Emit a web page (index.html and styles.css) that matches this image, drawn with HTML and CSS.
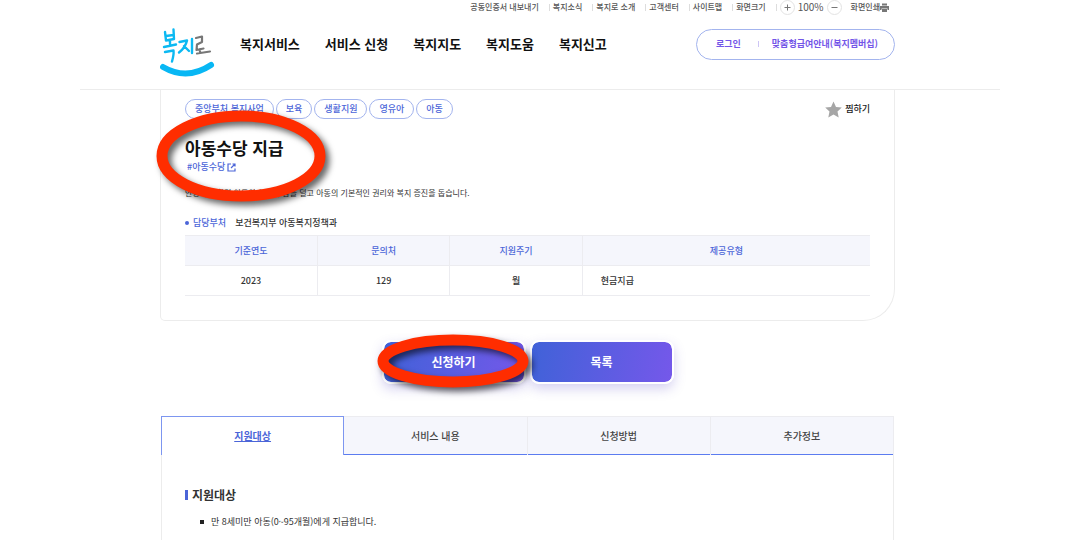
FILE: index.html
```html
<!DOCTYPE html>
<html lang="ko">
<head>
<meta charset="utf-8">
<title>아동수당 지급 - 복지로</title>
<link rel="stylesheet" href="styles.css">
</head>
<body>
<header class="header">
  <div class="inner">
    <ul class="utility">
      <li><a href="#">공동인증서 내보내기</a></li>
      <li><a href="#">복지소식</a></li>
      <li><a href="#">복지로 소개</a></li>
      <li><a href="#">고객센터</a></li>
      <li><a href="#">사이트맵</a></li>
      <li>화면크기</li>
      <li class="scale">
        <button class="round" type="button" aria-label="확대"><svg width="7" height="7" viewBox="0 0 7 7"><path d="M3.5 .5v6M.5 3.5h6" stroke="#777" fill="none"/></svg></button>
        <span class="percent">100%</span>
        <button class="round" type="button" aria-label="축소"><svg width="7" height="7" viewBox="0 0 7 7"><path d="M.5 3.5h6" stroke="#777" fill="none"/></svg></button>
      </li>
      <li class="print"><a href="#">화면인쇄<svg width="9" height="9" viewBox="0 0 9 9"><path d="M2 .5h5v2H2zM0 3h9v4H7.5V5.500h-6V7H0zM2 6h5v3H2z" fill="#777"/></svg></a></li>
    </ul>
    <div class="main-bar">
      <a class="logo" href="#" aria-label="복지로">
        <svg width="56" height="52" viewBox="0 0 56 52" fill="none" stroke-linecap="round" stroke-linejoin="round">
          <g stroke="#0cb9f2" stroke-width="2.400">
            <path d="M5 7l1 8.500M13.500 4.500L14 14M6 11l7.500-1M6 15.500l8-1.500M10 15v5M4 22l12-2.500M5 27l8.500-1.500q.5 4-1.500 11"/>
            <path d="M19.500 17l7.500-1.500q-1.500 7-8 12M24 21l5 5M32 14v14"/>
          </g>
          <path d="M36 13l6-1.500v5.500l-5 2.500-.5 5.500 7-1.500M40 24v4M37 28.500l13-2" stroke="#777" stroke-width="2.200"/>
          <path d="M3 42q24 14 48-2" stroke="#08b7f4" stroke-width="6"/>
        </svg>
      </a>
      <nav class="nav">
        <a href="#">복지서비스</a><a href="#">서비스 신청</a><a href="#">복지지도</a><a href="#">복지도움</a><a href="#">복지신고</a>
      </nav>
      <div class="account"><a href="#">로그인</a><a class="member" href="#">맞춤형급여안내(복지멤버십)</a></div>
    </div>
  </div>
</header>

<main class="inner">
  <section class="card">
    <div class="card-top">
      <ul class="tags"><li>중앙부처 복지사업</li><li>보육</li><li>생활지원</li><li>영유아</li><li>아동</li></ul>
      <button class="favorite" type="button"><svg width="17" height="17" viewBox="0 0 17 17"><path d="M8.500.5l2.500 5.400 5.800.7-4.300 4 1.200 5.900-5.200-3-5.200 3 1.200-5.900-4.300-4 5.800-.7z" fill="#a6a6a6"/></svg>찜하기</button>
    </div>
    <div class="title-box">
      <h1>아동수당 지급</h1>
      <svg class="ring ring-title" viewBox="0 0 170 92"><ellipse cx="85" cy="46" rx="79" ry="40"/></svg>
    </div>
    <a class="hash" href="#">#아동수당<svg width="9" height="9" viewBox="0 0 9 9"><path d="M4 1H1v7h7V5.500M5.500 1H8v2.500M8 1L4 5" fill="none" stroke="#4b65d8" stroke-width="1.200"/></svg></a>
    <p class="summary">안정적인 환경 아동의 양육 부담을 덜고 아동의 기본적인 권리와 복지 증진을 돕습니다.</p>
    <dl class="dept"><dt>담당부처</dt><dd>보건복지부 아동복지정책과</dd></dl>
    <table class="info">
      <thead><tr><th>기준연도</th><th>문의처</th><th>지원주기</th><th class="wide">제공유형</th></tr></thead>
      <tbody><tr><td>2023</td><td>129</td><td>월</td><td class="wide">현금지급</td></tr></tbody>
    </table>
  </section>

  <div class="actions">
    <div class="apply-box">
      <button class="action" type="button">신청하기</button>
      <svg class="ring ring-apply" viewBox="0 0 152 54"><ellipse cx="76" cy="27" rx="70" ry="21"/></svg>
    </div>
    <button class="action" type="button">목록</button>
  </div>

  <section class="detail">
    <div class="tabs" role="tablist">
      <button class="tab active" type="button" role="tab" aria-selected="true">지원대상</button>
      <button class="tab" type="button" role="tab">서비스 내용</button>
      <button class="tab" type="button" role="tab">신청방법</button>
      <button class="tab" type="button" role="tab">추가정보</button>
    </div>
    <div class="panel">
      <h2>지원대상</h2>
      <ul><li>만 8세미만 아동(0~95개월)에게 지급합니다.</li></ul>
    </div>
  </section>
</main>
</body>
</html>
```

FILE: styles.css
```css
* { box-sizing: border-box; }
body {
  margin: 0;
  background: #fff;
  color: #333;
  font-family: "Noto Sans CJK KR", sans-serif;
  font-size: 9px;
  font-weight: 500;
  line-height: 14px;
  overflow: hidden;
}
a { color: inherit; text-decoration: none; }
ul, dl, dd, h1, h2, p { margin: 0; padding: 0; list-style: none; }
button { font: inherit; color: inherit; border: 0; padding: 0; background: none; cursor: pointer; }
svg { display: block; }
.inner { margin: 0 185px 0 160px; }

.header { margin: 0 80px; border-bottom: 1px solid #ececec; padding-bottom: 15px; }
.header .inner { margin: 0 105px 0 80px; }
.utility {
  display: flex;
  justify-content: flex-end;
  align-items: center;
  height: 14px;
  padding-right: 6px;
  font-size: 8px;
  color: #555;
}
.utility li + li { margin-left: 10px; padding-left: 4px; background: linear-gradient(#ddd, #ddd) left center / 1px 7px no-repeat; }
.utility li.scale { display: flex; align-items: center; gap: 3px; }
.utility li.print { margin-left: 5px; background: none; }
.print a { display: flex; align-items: center; }
.round { width: 15px; height: 15px; border: 1px solid #e3e3e3; border-radius: 50%; display: grid; place-items: center; background: #fff; }
.percent { font-size: 10px; font-weight: 400; }
.main-bar { display: flex; align-items: center; height: 60px; }
.logo { margin-top: 14px; }
.nav { display: flex; gap: 25px; margin-left: 24px; font-size: 13px; font-weight: 700; line-height: 20px; color: #111; }
.account {
  margin-left: auto;
  display: flex;
  align-items: center;
  height: 31px;
  padding: 0 16px 0 19px;
  border: 1px solid #a3b4ee;
  border-radius: 16px;
  color: #7356e8;
  font-weight: 700;
}
.member { margin-left: 17px; padding-left: 14px; background: linear-gradient(#cdc5f5, #cdc5f5) left center / 1px 6px no-repeat; }

.card { border: 1px solid #ececec; border-top: 0; border-radius: 0 0 32px 5px; padding: 9px 24px 24px; }
.card-top { display: flex; justify-content: space-between; align-items: center; }
.tags { display: flex; gap: 2px; }
.tags li { height: 20px; padding: 0 9px; border: 1px solid #a3b4ee; border-radius: 10px; line-height: 18px; color: #4b65d8; }
.favorite { display: flex; align-items: center; gap: 3px; color: #222; }
.title-box { position: relative; margin-top: 16px; width: max-content; }
h1 { font-size: 17px; line-height: 26px; font-weight: 700; color: #111; }
.hash { display: flex; align-items: center; gap: 2px; width: max-content; margin: -1px 0 0 2px; color: #4b65d8; }
.summary { margin-top: 12px; font-size: 8px; font-weight: 400; }
.dept { display: flex; gap: 9px; margin-top: 16px; }
.dept dt { color: #4b65d8; display: flex; align-items: center; gap: 4px; }
.dept dt::before { content: ""; width: 4px; height: 4px; border-radius: 50%; background: #4b65d8; }
.info { width: 100%; margin-top: 5px; border-collapse: collapse; table-layout: fixed; border-top: 1px solid #ececf0; }
.info th, .info td { height: 30px; padding: 0; text-align: center; font-weight: 500; border-bottom: 1px solid #ececf0; }
.info th { background: #f5f6fc; color: #4b65d8; }
.info th + th, .info td + td { border-left: 1px solid #ececf0; }
.info .wide { width: 42%; }
.info td.wide { text-align: left; padding-left: 18px; }

.actions { display: flex; justify-content: center; gap: 4px; margin-top: 19px; }
.apply-box { position: relative; }
.action {
  width: 144px;
  height: 44px;
  border: 2px solid #fff;
  border-radius: 9px;
  background: linear-gradient(100deg, #4062d8, #7558ea) padding-box;
  box-shadow: 0 5px 12px rgba(90, 75, 200, .25);
  color: #fff;
  font-size: 12px;
  font-weight: 700;
}
.ring { position: absolute; z-index: 1; fill: none; stroke: #ff2d00; stroke-width: 11; overflow: visible; pointer-events: none; filter: drop-shadow(4px 4px 3px rgba(0, 0, 0, .6)); }
.ring-title { width: 170px; height: 92px; left: -29px; top: -25px; }
.ring-apply { width: 152px; height: 54px; left: -5px; top: -6px; }

.detail { margin: 32px 1px 0; }
.tabs { display: grid; grid-template-columns: repeat(4, 1fr); }
.tab { height: 39px; background: #f5f6fc; border: 0 solid #ececf0; border-width: 1px 1px 0 0; box-shadow: inset 0 -1px #5b7cf0; font-size: 10px; color: #444; }
.tab.active { background: #fff; color: #4b65d8; font-weight: 700; text-decoration: underline; border: 1px solid #7d96f0; border-bottom: 0; box-shadow: none; }
.panel { min-height: 110px; padding: 32px 23px; border: 1px solid #ececec; border-width: 0 1px; }
h2 { display: flex; align-items: center; gap: 4px; font-size: 12px; line-height: 16px; font-weight: 700; }
h2::before { content: ""; width: 3px; height: 10px; background: #4b65d8; }
.panel li { display: flex; align-items: center; gap: 7px; margin: 12px 0 0 15px; font-weight: 400; }
.panel li::before { content: ""; width: 4px; height: 4px; background: #222; }
```
